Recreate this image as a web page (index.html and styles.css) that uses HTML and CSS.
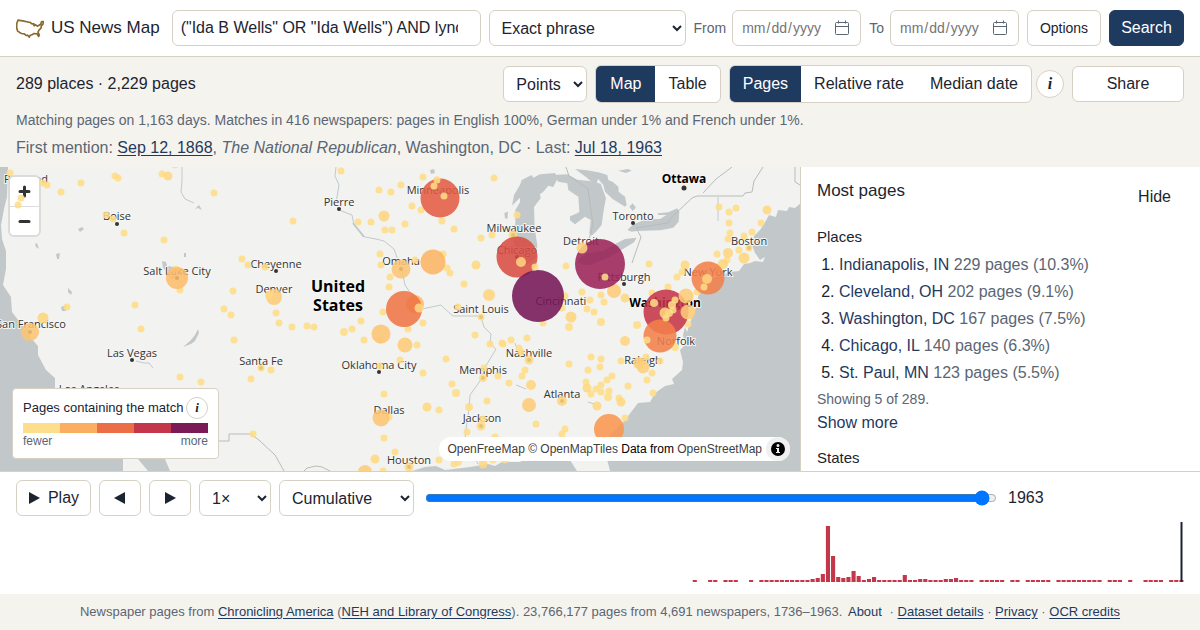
FILE: index.html
```html
<!DOCTYPE html>
<html lang="en">
<head>
<meta charset="utf-8">
<meta name="viewport" content="width=device-width, initial-scale=1">
<title>US News Map</title>
<link rel="stylesheet" href="styles.css">
</head>
<body>
<header class="topbar">
  <a class="brand" href="#">
    <svg class="brand-logo" viewBox="12 18 84 56" fill="none" stroke="#8a6a2f" stroke-width="5" stroke-linejoin="round" aria-hidden="true">
      <path d="M18 21 L32 23 L55 28 L60 32 L66 32 L66 38 L71 35 L76 39 L86 33 L89 25 L94 25 L93 33 L88 38 L87 45 L81 51 L78 57 L82 66 L80 70 L75 62 L66 61 L60 65 L54 67 L52 72 L47 66 L42 67 L37 62 L28 61 L17 54 L14 44 L14 32 Z"/>
    </svg>
    <span>US News Map</span>
  </a>
  <form class="search" onsubmit="return false">
    <input class="control query" type="text" aria-label="Search text" value="(&quot;Ida B Wells&quot; OR &quot;Ida Wells&quot;) AND lynching">
    <select class="control mode" aria-label="Match mode"><option>Exact phrase</option><option>All words</option></select>
    <label class="date-field">From <input class="control date" type="date"></label>
    <label class="date-field">To <input class="control date" type="date"></label>
    <button class="control small" type="button">Options</button>
    <button class="control primary" type="submit">Search</button>
  </form>
</header>

<section class="summary">
  <div class="toolbar">
    <p class="totals">289 places · 2,229 pages</p>
    <select class="control points" aria-label="Map style"><option>Points</option><option>States</option></select>
    <div class="segmented view">
      <button type="button" class="active">Map</button><button type="button">Table</button>
    </div>
    <div class="metric">
      <div class="segmented">
        <button type="button" class="active">Pages</button><button type="button">Relative rate</button><button type="button">Median date</button>
      </div>
      <button type="button" class="info large" aria-label="About the measures">i</button>
    </div>
    <button class="control share" type="button">Share</button>
  </div>
  <p class="detail">Matching pages on 1,163 days. Matches in 416 newspapers: pages in English 100%, German under 1% and French under 1%.</p>
  <p class="mentions">First mention: <a href="#">Sep 12, 1868</a>, <em>The National Republican</em>, Washington, DC · Last: <a href="#">Jul 18, 1963</a></p>
</section>

<main class="content">
  <div class="map">
    <svg class="layer" viewBox="0 0 800 304" preserveAspectRatio="xMidYMid slice" role="img" aria-label="Map of the United States">
      <g class="water">
        <path d="M0 0H8L7 30L4 42L1 58L2 72L6 84L6 102L3 118L11 130L12 145L22 158L28 161L31 171L38 179L38 188L46 203L55 211V222L80 226L108 245L118 280L123 292V304H0Z"/>
        <path d="M138 292H165L170 304H148Z"/>
        <path d="M801 36L795 41L789 40L787 44L778 43L776 50L769 48L764 57L760 63L754 69L752 78L755 86L760 93L765 90L763 95L755 94L750 96L744 97L739 104L730 105L712 112L704 117L698 130L697 138L693 148L690 156L687 165L685 160L683 168L685 178L680 183L683 195L682 203L672 212L674 217L665 219L655 226L650 235L638 236L625 253L612 266L605 276L604 284L608 296L610 304H801Z"/>
        <path d="M412 304L425 300L436 299L445 303L470 300L488 297L495 299L502 295L520 295L530 289L545 291L552 290L560 290L570 293L577 304Z"/>
        <path d="M162 94L166 95L167 99L174 100L178 108L172 112L168 106L163 101Z"/>
        <path d="M78 62L82 60L84 62L80 65ZM35 77L37 76L39 82L36 80ZM56 87L60 86L59 92H57ZM68 121L72 125L71 128L68 125ZM61 140L66 138L66 144L62 144ZM184 86H186V90H184ZM195 42L199 38L202 43L198 41ZM430 3L434 2L435 6L431 7Z"/>
        <path d="M183 180L190 174L195 168L198 162L199 166L195 174L191 177Z"/>
      </g>
      <g class="water" transform="translate(490 -2) scale(.3333)">
        <path d="M90 60L95 45L125 30L130 38L150 28L195 24L203 40L190 66L175 62L160 80L150 88L152 100L132 126L134 190L142 240L140 275L110 300L85 270L70 230L76 180L76 135L90 112L90 98L66 122L72 90Z"/>
        <path d="M190 30L232 28L262 44L300 48L332 56L348 100L342 130L335 180L318 200L305 212L298 205L302 165L285 155L255 178L240 166L240 154L262 145L268 140L265 95L235 75L232 55L205 50Z"/>
        <path d="M255 12L290 16L325 22L352 30L355 45L368 50L385 65L386 80L405 95L410 120L405 125L368 102L345 80L340 60L325 42L318 58L302 48L288 36Z"/>
        <path d="M385 17L415 12L425 17L408 24ZM418 125L428 115L438 128L428 138ZM43 144L54 140L52 162L45 160Z"/>
        <path d="M412 195L430 178L470 163L510 162L530 150H505L503 145L535 142L562 130L568 140L566 170L550 188L512 196L440 198L425 200Z"/>
        <path d="M262 290L270 280L290 265L340 258L380 235L405 222L440 218L432 232L360 276L300 300L280 300Z"/>
      </g>
      <g class="river">
        <path d="M182 0V14L181 25L185 32L194 36M336 0L335 9L339 18L337 30L335 38M339 43L352 48L354 58L365 70L376 72L384 74L394 82L398 93L402 104L405 118L417 136M422 142L441 138L445 142L453 149L478 149L481 150L484 160L491 167L490 177L496 182L490 192L484 202L480 214L470 228L469 242L466 262L465 272L478 297M515 176L518 185L525 190M516 218L526 222M588 235L594 237M136 194L144 196L149 196L153 201M718 30V54M686 186L692 176"/>
        <path d="M353 56L364 70" stroke-width="2"/>
      </g>
      <g class="border">
        <path d="M218 274H229V267H251L259 273L275 288L284 304M304 304L307 301L316 299L322 300L330 304M566 0L569 9L588 22L593 58L589 72M632 96L641 70L636 61L668 56L672 50L692 31L697 29H743L745 26L752 25L754 14L763 0M703 26L716 12L732 0M795 0V15L800 18"/>
      </g>
      <g class="city-dots">
        <circle cx="117" cy="57" r="2"/><circle cx="339" cy="42" r="2"/><circle cx="276" cy="104" r="2"/><circle cx="132" cy="193" r="2"/><circle cx="379" cy="205" r="2"/><circle cx="684" cy="21" r="2.5"/><circle cx="633" cy="56" r="2"/><circle cx="624" cy="117" r="2"/><circle cx="177" cy="111" r="2"/><circle cx="30" cy="165" r="2"/><circle cx="261" cy="201" r="2"/><circle cx="401" cy="102" r="2"/><circle cx="481" cy="150" r="2"/><circle cx="483" cy="211" r="2"/><circle cx="529" cy="193" r="2"/><circle cx="481" cy="259" r="2"/><circle cx="409" cy="300" r="2"/><circle cx="562" cy="234" r="2"/><circle cx="749" cy="81" r="2"/><circle cx="517" cy="90" r="2"/><circle cx="513" cy="68" r="2"/>
      </g>
      <g class="labels">
        <text x="26" y="16">Portland</text>
        <text x="117" y="53">Boise</text>
        <text x="177" y="108">Salt Lake City</text>
        <text x="276" y="101">Cheyenne</text>
        <text x="274" y="126">Denver</text>
        <text x="31" y="161">San Francisco</text>
        <text x="132" y="190">Las Vegas</text>
        <text x="261" y="198">Santa Fe</text>
        <text x="89" y="226">Los Angeles</text>
        <text x="339" y="39">Pierre</text>
        <text x="438" y="27">Minneapolis</text>
        <text x="401" y="98">Omaha</text>
        <text x="481" y="146">Saint Louis</text>
        <text x="379" y="202">Oklahoma City</text>
        <text x="389" y="247">Dallas</text>
        <text x="409" y="297">Houston</text>
        <text x="482" y="255">Jackson</text>
        <text x="483" y="207">Memphis</text>
        <text x="529" y="190">Nashville</text>
        <text x="562" y="231">Atlanta</text>
        <text x="514" y="65">Milwaukee</text>
        <text x="517" y="87">Chicago</text>
        <text x="561" y="138">Cincinnati</text>
        <text x="581" y="78">Detroit</text>
        <text x="624" y="114">Pittsburgh</text>
        <text x="633" y="53">Toronto</text>
        <text x="749" y="78">Boston</text>
        <text x="708" y="109">New York</text>
        <text x="676" y="178">Norfolk</text>
        <text x="643" y="197">Raleigh</text>
        <text class="capital" x="684" y="16">Ottawa</text>
        <text class="capital" x="665" y="140">Washington</text>
        <text class="country" x="338" y="125">United</text>
        <text class="country" x="338" y="144">States</text>
      </g>
    </svg>
    <div class="zoom">
      <button type="button" aria-label="Zoom in"><svg viewBox="0 0 29 29"><path d="M14.5 10v9M10 14.5h9"/></svg></button>
      <button type="button" aria-label="Zoom out"><svg viewBox="0 0 29 29"><path d="M10 14.5h9"/></svg></button>
    </div>
    <svg class="layer points-layer" id="points" viewBox="0 0 800 304" preserveAspectRatio="xMidYMid slice" aria-hidden="true"></svg>
    <div class="legend">
      <div class="legend-title"><span>Pages containing the match</span><button type="button" class="info" aria-label="About the legend">i</button></div>
      <div class="ramp"><i class="c1"></i><i class="c2"></i><i class="c3"></i><i class="c4"></i><i class="c5"></i></div>
      <div class="legend-ends"><span>fewer</span><span>more</span></div>
    </div>
    <div class="attribution">
      <p><a href="#">OpenFreeMap</a> <a href="#">© OpenMapTiles</a> Data from <a href="#">OpenStreetMap</a></p>
      <button type="button" aria-label="Toggle attribution"><svg viewBox="0 0 24 24"><circle cx="12" cy="12" r="12" fill="#f0f0f0"/><path fill-rule="evenodd" d="M5 12a7 7 0 1 0 14 0a7 7 0 1 0-14 0m5.500-3.500a1.500 1.500 0 1 0 3 0a1.500 1.500 0 1 0-3 0M10 11v1h1v3h-1v1h4v-1h-1v-4z"/></svg></button>
    </div>
  </div>
  <aside class="panel">
    <div class="panel-head"><h2>Most pages</h2><button type="button" class="plain">Hide</button></div>
    <h3>Places</h3>
    <ol>
      <li><a href="#">Indianapolis, IN</a> 229 pages (10.3%)</li>
      <li><a href="#">Cleveland, OH</a> 202 pages (9.1%)</li>
      <li><a href="#">Washington, DC</a> 167 pages (7.5%)</li>
      <li><a href="#">Chicago, IL</a> 140 pages (6.3%)</li>
      <li><a href="#">St. Paul, MN</a> 123 pages (5.5%)</li>
    </ol>
    <p class="showing">Showing 5 of 289.</p>
    <button type="button" class="more">Show more</button>
    <h3>States</h3>
  </aside>
</main>

<section class="timeline">
  <div class="playback">
    <button class="control play" type="button"><svg viewBox="0 0 12 12"><path d="M1 0L12 6L1 12Z"/></svg>Play</button>
    <button class="control step" type="button" aria-label="Previous year"><svg viewBox="0 0 12 12"><path d="M11 0L0 6L11 12Z"/></svg></button>
    <button class="control step" type="button" aria-label="Next year"><svg viewBox="0 0 12 12"><path d="M1 0L12 6L1 12Z"/></svg></button>
    <select class="control speed" aria-label="Speed"><option>1×</option><option>2×</option></select>
    <select class="control span" aria-label="Time span"><option>Cumulative</option><option>Single year</option></select>
    <input class="slider" id="year" type="range" min="1736" max="1966" value="1963" aria-label="Year">
    <output class="year" for="year">1963</output>
  </div>
  <svg class="histogram" id="histogram" viewBox="0 0 1168 60" preserveAspectRatio="none" role="img" aria-label="Pages per year"></svg>
</section>

<footer class="footer">
  <p>Newspaper pages from <a href="#">Chronicling America</a> (<a href="#">NEH and Library of Congress</a>). 23,766,177 pages from 4,691 newspapers, 1736–1963. <button type="button">About</button> · <a href="#">Dataset details</a> · <a href="#">Privacy</a> · <a href="#">OCR credits</a></p>
</footer>
<script src="app.js"></script>
</body>
</html>
```
FILE: styles.css
```css
:root {
  --ink: #1c2430;
  --muted: #5b6673;
  --navy: #1f3a5f;
  --paper: #f5f3ee;
  --line: #d6d1c4;
  --sans: "Liberation Sans", Arial, sans-serif;
}
* { box-sizing: border-box; }
body {
  margin: 0;
  min-height: 100vh;
  display: flex;
  flex-direction: column;
  font: 16px/24px var(--sans);
  color: var(--ink);
  background: #fff;
}
p, h2, h3, ol { margin: 0; font-weight: 400; }
button, input, select { font: inherit; color: inherit; }
button { cursor: pointer; }
a { color: var(--navy); text-underline-offset: 2px; }

.control {
  height: 36px;
  border: 1px solid var(--line);
  border-radius: 6px;
  background: #fff;
  padding: 0 12px;
}
select.control { padding: 0 0 0 8px; }
.small { font-size: 14px; }
.primary { background: var(--navy); border-color: var(--navy); color: #fff; }

.topbar {
  display: flex;
  align-items: center;
  gap: 12px;
  padding: 10px 16px;
  border-bottom: 1px solid var(--line);
}
.brand {
  display: flex;
  align-items: center;
  gap: 7px;
  color: var(--ink);
  font-size: 17px;
  text-decoration: none;
  white-space: nowrap;
}
.brand-logo { width: 28px; height: 19px; }
.search { flex: 1; display: flex; align-items: center; gap: 8px; min-width: 0; }
.query { flex: 1; min-width: 0; padding: 0 22px 0 8px; }
.mode { width: 197px; }
.date-field { display: flex; align-items: center; gap: 6px; font-size: 14px; color: var(--muted); }
.date { width: 129px; padding: 0 8px; font-size: 14px; color: #757575; }
.date::-webkit-calendar-picker-indicator {
  width: 16px;
  height: 16px;
  padding: 0;
  margin: 0 2px 0 0;
  background: url("data:image/svg+xml,%3Csvg xmlns='http://www.w3.org/2000/svg' viewBox='0 0 16 16' fill='none' stroke='%235b6673'%3E%3Crect x='1.500' y='2.500' width='13' height='12' rx='1'/%3E%3Cpath d='M1.500 6.500h13M4.500 0.500v3M11.500 0.500v3'/%3E%3C/svg%3E") center / 16px 16px no-repeat;
}
.search .small { width: 74px; padding: 0; }
.search .primary { width: 75px; padding: 0; }

.summary { background: var(--paper); padding: 8px 16px 6px; }
.toolbar { display: flex; align-items: center; gap: 8px; }
.totals { flex: 1; }
.points { width: 84px; }
.segmented {
  display: flex;
  height: 38px;
  border: 1px solid var(--line);
  border-radius: 6px;
  background: #fff;
  overflow: hidden;
}
.segmented button { border: 0; background: none; padding: 0 13px; white-space: nowrap; }
.segmented .active { background: var(--navy); color: #fff; }
.view .active { padding: 0 14px; }
.metric { display: flex; align-items: center; gap: 4px; }
.info {
  width: 22px;
  height: 22px;
  border: 1px solid var(--line);
  border-radius: 50%;
  background: #fff;
  padding: 0;
  font: italic bold 13px/20px "Liberation Serif", serif;
}
.info.large { width: 28px; height: 28px; font-size: 16px; }
.share { width: 112px; }
.detail { margin-top: 6px; font-size: 14px; line-height: 22px; color: var(--muted); }
.mentions { margin-top: 4px; line-height: 26px; color: var(--muted); }

.content { flex: 1; display: grid; grid-template-columns: 2fr 1fr; min-height: 304px; border-bottom: 1px solid var(--line); }
.map { position: relative; overflow: hidden; background: #f2f3f0; }
.layer { position: absolute; inset: 0; width: 100%; height: 100%; }
.points-layer { pointer-events: none; }
.water { fill: #c2c8ca; }
.river { fill: none; stroke: #c0cacd; stroke-width: 1; }
.border { fill: none; stroke: #b9bbbb; stroke-width: 1; }
.city-dots { fill: #333; }
.labels {
  font: 11px "Open Sans", "Noto Sans", sans-serif;
  text-anchor: middle;
  fill: #333;
  stroke: #f6f6f4;
  stroke-width: 2px;
  stroke-linejoin: round;
  paint-order: stroke;
}
.capital { font-size: 12px; font-weight: 700; fill: #000; }
.country { font-size: 16px; font-weight: 700; fill: #000; }
.zoom {
  position: absolute;
  left: 8px;
  top: 8px;
  border: 2px solid #dbdbd9;
  border-radius: 6px;
  background: #fff;
  overflow: hidden;
}
.zoom button { display: block; width: 29px; height: 29px; border: 0; padding: 0; background: none; }
.zoom button + button { border-top: 1px solid #ddd; }
.zoom svg { display: block; fill: none; stroke: #333; stroke-width: 3; stroke-linecap: round; }
.legend {
  position: absolute;
  left: 12px;
  bottom: 12px;
  width: 207px;
  padding: 8px 10px 9px;
  border: 1px solid var(--line);
  border-radius: 4px;
  background: #fff;
  font-size: 13px;
  line-height: 16px;
}
.legend-title { display: flex; justify-content: space-between; align-items: center; margin-bottom: 4px; white-space: nowrap; }
.ramp { display: flex; height: 10px; }
.ramp i { flex: 1; }
.c1 { background: #fddf8b; }
.c2 { background: #fcae60; }
.c3 { background: #ec6e46; }
.c4 { background: #c4374a; }
.c5 { background: #7a1b58; }
.legend-ends { display: flex; justify-content: space-between; font-size: 12px; color: var(--muted); }
.attribution {
  position: absolute;
  right: 10px;
  bottom: 10px;
  display: flex;
  align-items: center;
  gap: 4px;
  padding-left: 8px;
  border-radius: 12px;
  background: #fff;
  font-size: 12px;
  color: #000;
  white-space: nowrap;
}
.attribution a { color: #404040; text-decoration: none; }
.attribution button { width: 24px; height: 24px; border: 0; padding: 0; background: none; }
.attribution svg { display: block; }

.panel { border-left: 1px solid var(--line); padding: 12px 16px 0; height: 0; min-height: 100%; overflow: hidden; }
.panel-head { display: flex; justify-content: space-between; }
.panel h2 { font-size: 17px; line-height: 24px; }
.plain { height: 36px; border: 0; background: none; padding: 0 13px; }
.panel h3 { font-size: 15px; line-height: 22px; }
.panel-head + h3 { margin-top: 11px; }
.panel ol { padding-left: 22px; margin-top: 3px; color: var(--muted); line-height: 27px; }
.panel li::marker { color: var(--ink); }
.panel li a { text-decoration: none; }
.showing { font-size: 14px; line-height: 26px; color: var(--muted); }
.more { display: block; border: 0; background: none; padding: 0; line-height: 22px; color: var(--navy); }
.more + h3 { margin-top: 13px; }

.timeline { padding: 8px 16px 12px; }
.playback { display: flex; align-items: center; gap: 8px; }
.playback button { display: flex; align-items: center; justify-content: center; gap: 8px; }
.playback svg { width: 12px; height: 12px; fill: var(--ink); }
.play { width: 75px; padding: 0; }
.step { width: 42px; padding: 0; }
.speed { width: 72px; }
.span { width: 135px; }
.slider { flex: 1; min-width: 0; margin: 0 3px; accent-color: #0075ff; }
.year { width: 176px; }
.histogram { display: block; width: 100%; height: 60px; margin-top: 6px; }
.histogram .bar { fill: #c4374a; }
.histogram .now { fill: var(--ink); }

.footer { background: var(--paper); padding: 6px 16px; font-size: 13px; line-height: 24px; text-align: center; color: var(--muted); }
.footer button { border: 0; background: none; padding: 0 4px 0 2px; color: var(--navy); }
```
FILE: app.js
```js
const NS = "http://www.w3.org/2000/svg";

function add(parent, tag, attrs) {
  const el = document.createElementNS(NS, tag);
  for (const key in attrs) el.setAttribute(key, attrs[key]);
  parent.appendChild(el);
}

// Places with few pages: x, y, x, y, ...
const small = [
  10,6, 43,16, 47,18, 61,25, 81,16, 115,9, 118,11, 162,7, 175,-2, 214,26, 21,31, 18,38,
  106,48, 113,52, 124,66, 164,73, 242,92, 248,98, 265,100, 176,102, 180,123, 67,140,
  135,138, 141,162, 233,124, 224,142, 231,148, 234,173, 180,210, 201,215, 261,201,
  251,212, 253,267, 341,4, 293,54, 379,23, 391,25, 401,18, 423,10, 437,13, 434,19,
  412,39, 421,43, 358,55, 371,55, 405,57, 385,63, 392,63, 442,54, 454,62, 494,11,
  517,48, 492,68, 481,71, 380,87, 381,98, 415,93, 443,87, 447,101, 450,106, 390,110,
  389,120, 464,117, 383,145, 423,156, 458,140, 481,150, 276,146, 279,156, 292,160,
  307,159, 314,160, 352,162, 361,154, 364,173, 380,173, 408,162, 417,178, 475,168,
  490,177, 502,176, 503,177, 511,173, 527,171, 519,181, 521,185, 446,192, 400,193,
  380,199, 423,206, 484,201, 498,209, 525,203, 522,209, 509,216, 452,217, 384,227,
  271,203, 439,243, 487,234, 389,250, 483,252, 467,265, 495,270, 384,271, 395,285,
  383,304, 439,293, 454,297, 493,293, 505,293, 566,99, 649,97, 682,105, 677,110,
  668,120, 582,125, 601,128, 565,129, 590,133, 604,135, 587,142, 594,145, 562,141,
  543,156, 652,126, 688,157, 697,125, 717,87, 727,93, 739,83, 728,72, 730,66, 744,69,
  752,65, 761,56, 729,56, 729,45, 736,41, 719,40, 569,197, 591,190, 601,192, 600,200,
  588,203, 621,194, 646,190, 660,194, 652,206, 647,213, 653,226, 612,209, 607,213,
  601,218, 586,215, 591,227, 596,222, 601,225, 609,224, 628,219, 619,231, 625,251,
  536,257, 565,262, 562,267
];

// Larger places: x, y, radius, colour
const large = [
  [168,9,4.5,"#fed882"], [177,111,11,"#fdbb6a"], [43,151,5.5,"#fed57f"], [30,165,9,"#fdc473"],
  [384,49,5.5,"#fed57f"], [513,68,4.5,"#fed882"], [401,102,9.5,"#fdc473"], [433,95,12.5,"#fcb363"],
  [476,98,4.5,"#fed882"], [489,128,6,"#fed57f"], [274,130,8,"#fdcb78"], [269,128,4,"#fed882"],
  [344,165,4,"#fedc86"], [381,167,9.5,"#fdc473"], [405,178,7.5,"#fdcb78"], [529,193,4.5,"#fed882"],
  [483,211,4,"#fedc86"], [531,218,5,"#fed57f"], [456,226,4,"#fedc86"], [427,240,4.5,"#fed882"],
  [469,240,4,"#fedc86"], [529,238,7,"#fdcb78"], [381,251,8.5,"#fdc473"], [481,259,4.5,"#fed882"],
  [375,292,4.5,"#fed882"], [365,305,7,"#fdcb78"], [409,300,4.5,"#fed882"], [458,295,4,"#fedc86"],
  [483,297,4.5,"#fed882"], [685,98,4.5,"#fed882"], [614,124,7,"#fdcb78"], [625,131,4.5,"#fed882"],
  [571,150,5.5,"#fed57f"], [569,160,4,"#fedc86"], [601,155,4,"#fedc86"], [625,174,5,"#fed57f"],
  [637,158,4,"#fedc86"], [675,180,4,"#fedc86"], [728,86,5,"#fed57f"], [723,97,5,"#fed57f"],
  [719,100,4,"#fedc86"], [744,91,5.5,"#fed57f"], [749,81,3.5,"#fedc86"], [767,43,4.5,"#fed882"],
  [643,200,6.5,"#fdcf7a"], [639,196,6,"#fdcf7a"], [587,221,4.5,"#fed882"], [608,230,4,"#fedc86"],
  [597,239,4.5,"#fed882"], [621,235,4.5,"#fed882"], [562,234,5,"#fed57f"], [609,262,15,"#f9954f"],
  [415,137,9,"#fdbb6a"], [404,142,18,"#ef7345"], [440,31,19.5,"#e25b42"], [517,90,20.5,"#d84b43"],
  [538,129,26,"#741557"], [600,97,25,"#9a2157"], [666,145,22.5,"#c43347"], [660,169,16.5,"#f27f4a"],
  [708,111,16.5,"#f27f4a"],
  // Towns drawn above their larger neighbours
  [444,29,3.5,"#fedc86"], [437,13,3.5,"#fedc86"], [434,19,3.5,"#fedc86"],
  [521,95,5,"#fed57f"], [535,100,3.5,"#fedc86"], [419,141,4.5,"#fed882"],
  [582,81,5.5,"#fed57f"], [605,110,3.5,"#fedc86"], [654,136,4,"#fedc86"], [686,129,7.5,"#fdcb78"],
  [688,145,7.5,"#fdcb78"], [675,133,3.5,"#fedc86"], [672,138,4,"#fedc86"], [673,143,3.5,"#fedc86"],
  [669,146,4,"#fedc86"], [665,146,5.5,"#fed57f"], [666,151,3.5,"#fedc86"], [647,173,3.5,"#fedc86"],
  [707,112,5,"#fed57f"], [704,120,3.5,"#fedc86"]
];

const points = document.getElementById("points");
for (let i = 0; i < small.length; i += 2) {
  add(points, "circle", { cx: small[i], cy: small[i + 1], r: 3.5, fill: "#fedc86", "fill-opacity": 0.87 });
}
for (const [cx, cy, r, fill] of large) {
  add(points, "circle", { cx, cy, r, fill, "fill-opacity": 0.87 });
}

// Runs of years, counted from 1736: first, last, bar height
const runs = [
  [132,132,2], [135,136,2], [138,138,2], [139,140,2], [143,143,2], [145,154,2], [155,155,3],
  [156,156,4], [157,157,8], [158,158,56], [159,159,26], [160,160,5], [161,161,4], [162,162,5],
  [163,163,11], [164,164,6], [165,165,2], [166,166,3], [167,167,5], [168,172,2], [173,173,7],
  [174,175,2], [176,177,3], [178,180,2], [181,182,3], [183,183,4], [184,186,2], [188,192,2],
  [194,195,2], [197,201,2], [203,211,2], [213,215,2], [217,217,2], [220,223,2], [225,227,2]
];
const histogram = document.getElementById("histogram");
const pitch = 1168 / 228;
for (const [first, last, height] of runs) {
  for (let i = first; i <= last; i++) {
    add(histogram, "rect", { class: "bar", x: i * pitch + 0.5, y: 60 - height, width: pitch - 1, height });
  }
}
add(histogram, "rect", { class: "now", x: 1164.5, y: 0, width: 2, height: 60 });
```
